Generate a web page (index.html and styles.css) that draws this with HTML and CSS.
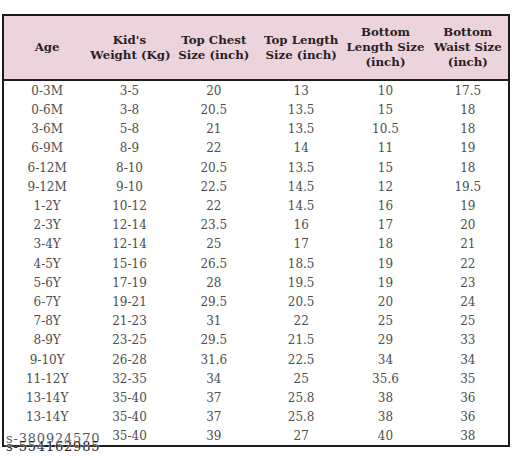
FILE: index.html
```html
<!DOCTYPE html>
<html lang="en">
<head>
	<meta charset="UTF-8">
	<title>Size Chart</title>
	<link rel="stylesheet" href="styles.css">
</head>
<body>
	<div class="chart">
		<table class="size-table">
			<colgroup>
				<col class="c-age">
				<col class="c-weight">
				<col class="c-chest">
				<col class="c-tlen">
				<col class="c-blen">
				<col class="c-waist">
			</colgroup>
			<thead>
				<tr>
					<th>Age</th>
					<th>Kid's<br>Weight (Kg)</th>
					<th>Top Chest<br>Size (inch)</th>
					<th>Top Length<br>Size (inch)</th>
					<th>Bottom<br>Length Size<br>(inch)</th>
					<th>Bottom<br>Waist Size<br>(inch)</th>
				</tr>
			</thead>
			<tbody>
				<tr><td>0-3M</td><td>3-5</td><td>20</td><td>13</td><td>10</td><td>17.5</td></tr>
				<tr><td>0-6M</td><td>3-8</td><td>20.5</td><td>13.5</td><td>15</td><td>18</td></tr>
				<tr><td>3-6M</td><td>5-8</td><td>21</td><td>13.5</td><td>10.5</td><td>18</td></tr>
				<tr><td>6-9M</td><td>8-9</td><td>22</td><td>14</td><td>11</td><td>19</td></tr>
				<tr><td>6-12M</td><td>8-10</td><td>20.5</td><td>13.5</td><td>15</td><td>18</td></tr>
				<tr><td>9-12M</td><td>9-10</td><td>22.5</td><td>14.5</td><td>12</td><td>19.5</td></tr>
				<tr><td>1-2Y</td><td>10-12</td><td>22</td><td>14.5</td><td>16</td><td>19</td></tr>
				<tr><td>2-3Y</td><td>12-14</td><td>23.5</td><td>16</td><td>17</td><td>20</td></tr>
				<tr><td>3-4Y</td><td>12-14</td><td>25</td><td>17</td><td>18</td><td>21</td></tr>
				<tr><td>4-5Y</td><td>15-16</td><td>26.5</td><td>18.5</td><td>19</td><td>22</td></tr>
				<tr><td>5-6Y</td><td>17-19</td><td>28</td><td>19.5</td><td>19</td><td>23</td></tr>
				<tr><td>6-7Y</td><td>19-21</td><td>29.5</td><td>20.5</td><td>20</td><td>24</td></tr>
				<tr><td>7-8Y</td><td>21-23</td><td>31</td><td>22</td><td>25</td><td>25</td></tr>
				<tr><td>8-9Y</td><td>23-25</td><td>29.5</td><td>21.5</td><td>29</td><td>33</td></tr>
				<tr><td>9-10Y</td><td>26-28</td><td>31.6</td><td>22.5</td><td>34</td><td>34</td></tr>
				<tr><td>11-12Y</td><td>32-35</td><td>34</td><td>25</td><td>35.6</td><td>35</td></tr>
				<tr><td>13-14Y</td><td>35-40</td><td>37</td><td>25.8</td><td>38</td><td>36</td></tr>
				<tr><td>13-14Y</td><td>35-40</td><td>37</td><td>25.8</td><td>38</td><td>36</td></tr>
				<tr><td></td><td>35-40</td><td>39</td><td>27</td><td>40</td><td>38</td></tr>
			</tbody>
		</table>
		<div class="stamp">
			<span class="stamp-a">s-380924570</span>
			<span class="stamp-b">s-554162985</span>
		</div>
	</div>
</body>
</html>
```

FILE: styles.css
```css
*{
	margin:0;
	padding:0;
}
html,body{ height: 100%; }
body{
	background: #fff;
	font-family: 'DejaVu Serif', serif;
}
.chart{
	position: relative;
	width: 508px;
	padding: 14px 0 0 2px;
}
.size-table{
	width: 508px;
	border-collapse: collapse;
	border: 2px solid #1c1c1c;
	table-layout: fixed;
}
.c-age{ width: 87px; }
.c-weight{ width: 78px; }
.c-chest{ width: 90px; }
.c-tlen{ width: 84px; }
.c-blen{ width: 84px; }
.c-waist{ width: 81px; }
.size-table thead tr{
	height: 65px;
	background: #ecd4dd;
	border-bottom: 2px solid #1c1c1c;
}
.size-table th{
	font-size: 11.8px;
	line-height: 15px;
	font-weight: bold;
	color: #2b1f25;
	text-align: center;
	vertical-align: middle;
	white-space: nowrap;
}
.size-table td{
	height: 19.2px;
	padding: 2px 0 0;
	box-sizing: border-box;
	font-size: 12px;
	line-height: 17px;
	color: #4e4e4e;
	text-align: center;
}
.stamp{
	position: absolute;
	left: 6px;
	top: 431px;
	width: 96px;
	height: 20px;
	font-size: 13px;
}
.stamp span{
	position: absolute;
	left: 0;
	white-space: nowrap;
	letter-spacing: 0.8px;
}
.stamp-a{
	top: 0;
	color: #5a5a5a;
}
.stamp-b{
	top: 8px;
	color: #222;
	text-shadow: 0 0 1px #fff, 0 0 2px #fff;
}
```
